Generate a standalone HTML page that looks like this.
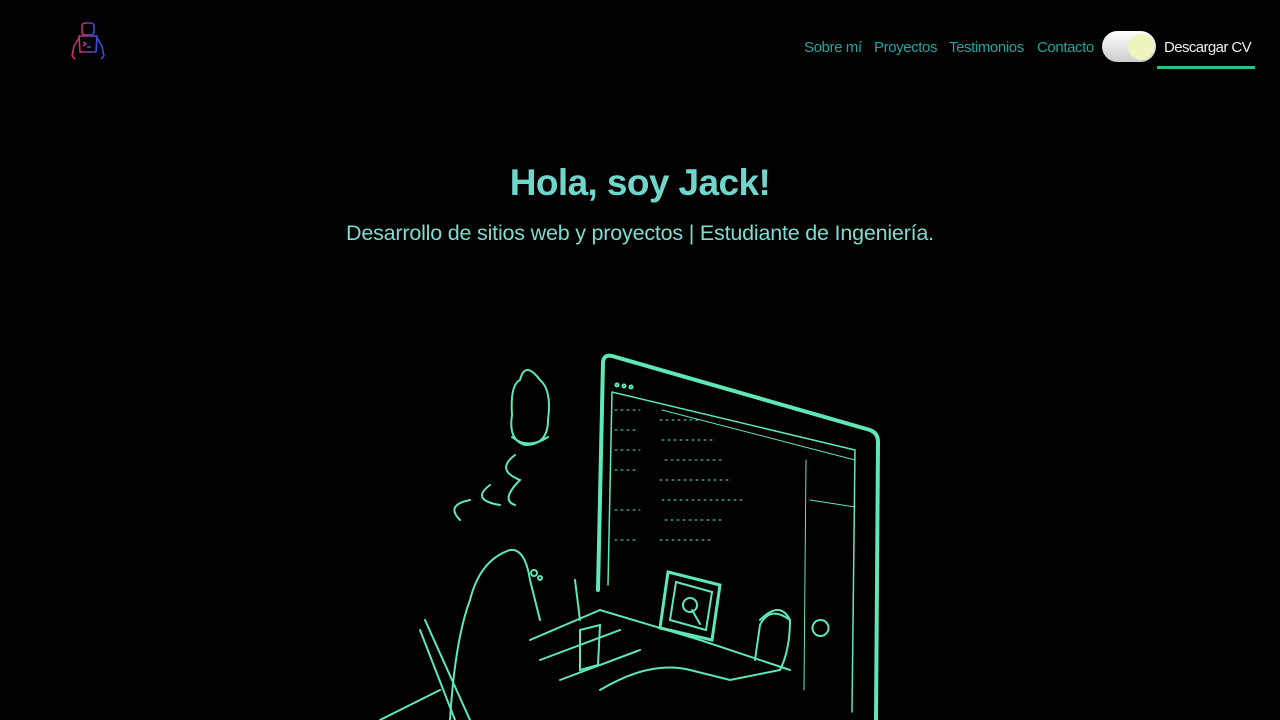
<!DOCTYPE html>
<html><head><meta charset="utf-8"><style>
body{margin:0;width:1280px;height:720px;background:#000;overflow:hidden;font-family:"Liberation Sans",sans-serif;position:relative}
nav{position:absolute;top:39px;left:804px;font-size:15px;letter-spacing:-0.4px;color:#1fa5a0;white-space:nowrap}
nav span{position:absolute;top:0}
.tog{position:absolute;left:1102px;top:31px;width:54px;height:31px;border-radius:16px;background:linear-gradient(#fff,#ccc)}
.tog i{position:absolute;right:2px;top:3px;width:26px;height:26px;border-radius:50%;background:#f0f5c0}
.cv{position:absolute;left:1164px;top:39px;font-size:15px;letter-spacing:-0.6px;color:#eee}
.ul{position:absolute;left:1157px;top:66px;width:98px;height:3px;background:#2fc08a}
h1{position:absolute;top:162px;width:100%;text-align:center;margin:0;font-size:37px;font-weight:bold;color:#6fd6cc;letter-spacing:-0.6px}
h2{position:absolute;top:221px;width:100%;text-align:center;margin:0;font-size:21.5px;font-weight:normal;color:#7fdcd0;letter-spacing:-0.2px}
</style></head><body>
<svg style="position:absolute;left:68px;top:20px" width="42" height="42" viewBox="0 0 42 42" fill="none" stroke-width="1.6">
<defs><linearGradient id="g" x1="0" x2="1"><stop offset="0" stop-color="#d0306a"/><stop offset="1" stop-color="#3050e0"/></linearGradient></defs>
<g stroke="url(#g)"><rect x="14" y="3" width="12" height="12" rx="3"/><path d="M11 16h18l-1 16H12z"/><path d="M15 22l3 2-3 2M19 27h4"/><path d="M11 18l-5 8-2 10M29 18l5 8 2 10M4 36l3 3M36 36l-3 3"/></g></svg>
<nav><span style="left:0">Sobre mí</span><span style="left:70px">Proyectos</span><span style="left:145px">Testimonios</span><span style="left:233px">Contacto</span></nav>
<div class="tog"><i></i></div>
<div class="cv">Descargar CV</div><div class="ul"></div>
<h1>Hola, soy Jack!</h1>
<h2>Desarrollo de sitios web y proyectos | Estudiante de Ingeniería.</h2>
<svg style="position:absolute;left:0;top:0" width="1280" height="720" fill="none" stroke="#5ee8b8" stroke-width="2" stroke-linecap="round">
<path d="M598 590L603 362Q604 354 612 356L870 430Q878 433 878 442L876 720" stroke-width="4"/>
<path d="M612 392L855 450L852 712M612 392L608 585" stroke-width="1.5"/>
<path d="M662 410L855 460M806 460L804 690M810 500L855 507" stroke-width="1"/>
<circle cx="617" cy="385" r="1.5"/><circle cx="624" cy="386" r="1.5"/><circle cx="631" cy="387" r="1.5"/>
<g stroke-width="1" stroke-dasharray="2 4"><path d="M660 420h40M662 440h50M665 460h60M660 480h70M662 500h80M665 520h60M660 540h50"/><path d="M615 410h25M615 430h20M615 450h25M615 470h20M615 510h25M615 540h20"/></g>
<path d="M668 572L720 585L712 640L660 628Z" stroke-width="3"/><path d="M676 582L712 592L706 630L670 620Z"/><circle cx="690" cy="605" r="7"/><path d="M692 610L700 624"/>
<path d="M520 380Q525 360 540 380Q552 390 548 420Q548 445 525 445Q508 440 512 415Q510 385 520 380M512 437Q528 450 548 437"/>
<path d="M515 455Q495 470 520 480Q500 500 515 505M490 485Q470 500 500 505M470 500Q445 505 460 520"/>
<path d="M450 720Q455 640 470 600Q480 560 510 550Q525 548 530 580L540 620"/>
<path d="M425 620L470 720M420 630L455 720M380 720L440 690"/>
<path d="M530 640L600 610L700 640L790 670M540 660L620 630M560 680L640 650"/>
<path d="M580 620L575 580M580 630L600 625L598 665L580 670Z"/>
<path d="M600 690Q650 660 690 670L730 680L780 670Q790 650 790 620Q770 605 760 625L755 660"/>
<path d="M760 620Q780 600 790 620M820 620a8 8 0 1 0 1 0"/>
<circle cx="534" cy="573" r="3"/><circle cx="540" cy="578" r="2"/>
</svg>
</body></html>
